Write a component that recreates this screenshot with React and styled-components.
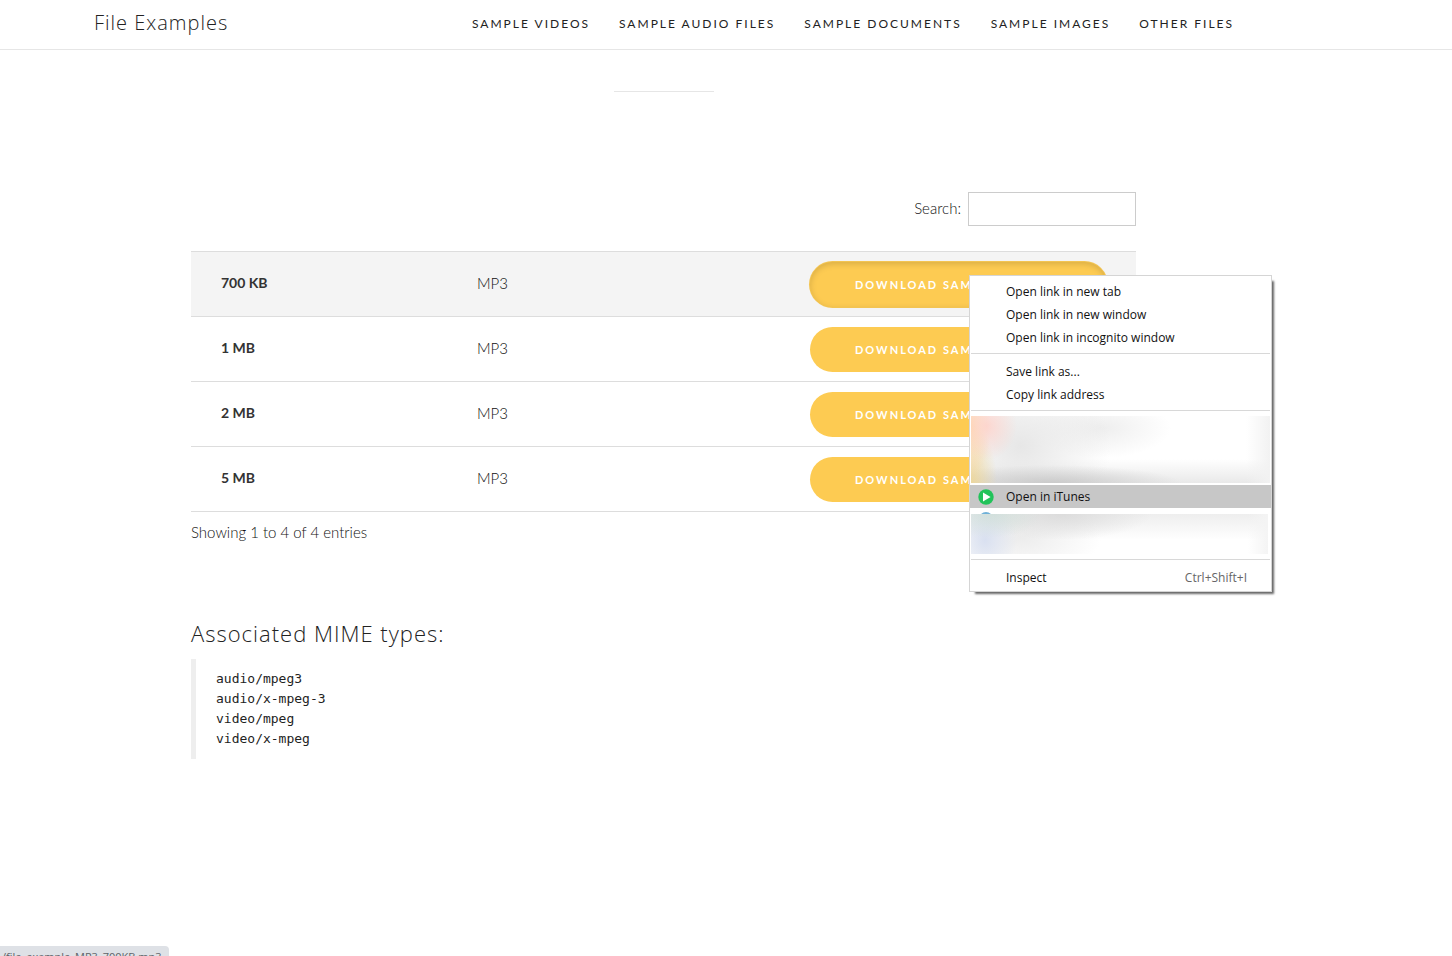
import React from 'react';
import styled, { createGlobalStyle, css } from 'styled-components';

const GlobalStyle = createGlobalStyle`
  * {
    box-sizing: border-box;
  }

  body {
    background: #fff;
    color: #111;
    font-family: Lato, "Liberation Sans", sans-serif;
    font-size: 15px;
    line-height: 28px;
    margin: 0;
  }
`;

const Page = styled.div`
  min-height: 100vh;
  position: relative;
`;

const Header = styled.header`
  border-bottom: 1px solid #e6e6e6;
  padding-right: 124px;
`;

const HeaderInner = styled.div`
  align-items: center;
  display: flex;
  height: 49px;
  justify-content: space-between;
  margin: 0 auto;
  max-width: 1140px;
  padding-bottom: 2px;
`;

const Logo = styled.a`
  color: #222;
  font-family: "Open Sans", "Noto Sans", sans-serif;
  font-size: 20px;
  font-weight: 300;
  letter-spacing: 1px;
  padding-bottom: 2px;
  text-decoration: none;
`;

const Nav = styled.nav`
  display: flex;
  gap: 29px;
`;

const NavLink = styled.a`
  color: #222;
  font-size: 12px;
  letter-spacing: 2px;
  text-decoration: none;
  text-transform: uppercase;
  white-space: nowrap;
`;

const Main = styled.main`
  padding: 41px 125px 0 0;
`;

const Divider = styled.hr`
  border: 0;
  border-top: 1px solid #e6e6e6;
  margin: 0 auto 100px;
  width: 100px;
`;

const Content = styled.div`
  margin: 0 auto;
  max-width: 945px;
`;

const SearchBar = styled.div`
  align-items: center;
  display: flex;
  gap: 7px;
  justify-content: flex-end;
  margin-bottom: 25px;
`;

const SearchLabel = styled.label`
  font-weight: 300;
  padding-bottom: 2px;
`;

const SearchInput = styled.input`
  border: 1px solid #ccc;
  font: inherit;
  height: 34px;
  padding: 0 10px;
  width: 168px;
`;

const FilesTable = styled.table`
  border-collapse: collapse;
  table-layout: fixed;
  width: 100%;
`;

const Row = styled.tr`
  background: ${props => (props.$hovered ? '#f4f4f4' : '#fff')};
  border-bottom: 1px solid #ddd;
  border-top: 1px solid #ddd;
  height: 65px;
`;

const textCell = css`
  padding: 0 30px 2px;
  text-align: left;
`;

const SizeCell = styled.th`
  ${textCell}
  color: #333;
  font-size: 14px;
  font-weight: bold;
  width: 256px;
`;

const TypeCell = styled.td`
  ${textCell}
  font-weight: 300;
`;

const ActionCell = styled.td`
  padding: 0 29px 0 30px;
  width: 356px;
`;

const DownloadLink = styled.a`
  background: #fdcb52;
  border-radius: 23px;
  box-shadow: ${props => (props.$hovered ? 'inset 0 2px 6px rgba(0, 0, 0, 0.15), 0 0 0 1px #f3c452' : 'none')};
  color: #fff;
  display: block;
  font-size: 11px;
  font-weight: bold;
  letter-spacing: 2px;
  line-height: 45px;
  padding: 0 45px;
  text-decoration: none;
  text-transform: uppercase;
  white-space: nowrap;
`;

const TableInfo = styled.div`
  font-weight: 300;
  margin: 6px 0 72px;
`;

const Heading = styled.h3`
  color: #222;
  font-family: "Open Sans", "Noto Sans", sans-serif;
  font-size: 22px;
  font-weight: 300;
  letter-spacing: 1px;
  line-height: 30px;
  margin: 0 0 11px;
`;

const MimeTypes = styled.pre`
  border-left: 5px solid #eee;
  color: #222;
  font-family: "DejaVu Sans Mono", monospace;
  font-size: 13px;
  line-height: 20px;
  margin: 0;
  padding: 10px 20px;
`;

const ContextMenu = styled.div`
  background: #fff;
  border: 1px solid #d5d5d5;
  box-shadow: 4px 4px 2px -2px rgba(0, 0, 0, 0.6);
  left: 969px;
  padding: 3px 0 2px;
  position: absolute;
  top: 275px;
  width: 303px;
`;

const MenuGroup = styled.div`
  padding-top: 1px;
`;

const MenuItem = styled.button`
  align-items: center;
  background: ${props => (props.$selected ? '#c7c7c7' : 'transparent')};
  border: 0;
  color: #111;
  display: flex;
  font-family: "Open Sans", "Noto Sans", sans-serif;
  font-size: 12px;
  height: 23px;
  padding: 0 24px 0 8px;
  text-align: left;
  width: 100%;
`;

const ItemIcon = styled.span`
  display: flex;
  width: 28px;
`;

const Shortcut = styled.span`
  color: #666;
  margin-left: auto;
`;

const Separator = styled.hr`
  border: 0;
  border-top: 1px solid #d8d8d8;
  margin: 4px 1px 5px;
`;

const HazeTop = styled.div`
  background:
    radial-gradient(ellipse 30px 34px at 16px 10px, rgba(255, 208, 200, 0.8), transparent),
    radial-gradient(ellipse 20px 50px at 0 10px, rgba(255, 215, 170, 0.9), transparent),
    radial-gradient(ellipse 26px 60px at 0 100%, rgba(238, 214, 150, 0.9), transparent),
    radial-gradient(ellipse 130px 18px at 80px 100%, rgba(195, 195, 195, 0.8), transparent),
    radial-gradient(ellipse 90px 80px at 50px 30px, rgba(228, 228, 228, 0.9), transparent),
    radial-gradient(ellipse 70px 30px at 130px 12px, rgba(236, 236, 236, 0.9), transparent),
    linear-gradient(to left, #f2f2f2, transparent 24px),
    linear-gradient(to top, #e9e9e9, #fff 24px);
  height: 67px;
  margin: 0 1px 2px;
`;

const HazeBottom = styled.div`
  background:
    radial-gradient(ellipse 50px 24px at 20px 0, rgba(205, 222, 216, 0.8), transparent),
    radial-gradient(ellipse 32px 40px at 14px 26px, rgba(214, 222, 240, 0.9), transparent),
    radial-gradient(ellipse 90px 26px at 90px 0, rgba(218, 218, 218, 0.9), transparent),
    radial-gradient(ellipse 80px 40px at 50px 24px, rgba(234, 234, 234, 0.9), transparent),
    linear-gradient(to left, #f4f4f4, transparent 20px),
    linear-gradient(to bottom, #eee, #fff 26px);
  height: 40px;
  margin: 0 3px 5px 1px;
`;

const IconPeek = styled.div`
  height: 6px;
  overflow: hidden;
  padding: 4px 0 0 9px;

  svg {
    display: block;
  }
`;

const StatusBubble = styled.div`
  background: #dee1e6;
  border-radius: 0 4px 0 0;
  bottom: -12px;
  color: #5f6368;
  font-family: "Open Sans", "Noto Sans", sans-serif;
  font-size: 11px;
  height: 22px;
  left: 0;
  line-height: 22px;
  padding: 0 8px 0 2px;
  position: fixed;
`;

const navLinks = ['Sample Videos', 'Sample Audio Files', 'Sample Documents', 'Sample Images', 'Other Files'];

const files = [
  { size: '700 KB', type: 'MP3', hovered: true },
  { size: '1 MB', type: 'MP3' },
  { size: '2 MB', type: 'MP3' },
  { size: '5 MB', type: 'MP3' },
];

const mimeTypes = ['audio/mpeg3', 'audio/x-mpeg-3', 'video/mpeg', 'video/x-mpeg'];

const PlayIcon = () => (
  <svg width="16" height="16" viewBox="0 0 16 16">
    <circle cx="8" cy="8" r="7.7" fill="#22c35a" />
    <path d="M5 3.6v8.8L12.6 8z" fill="#fff" />
  </svg>
);

const Item = ({ label, icon, shortcut, selected }) => (
  <MenuItem type="button" role="menuitem" $selected={selected}>
    <ItemIcon>{icon}</ItemIcon>
    {label}
    {shortcut && <Shortcut>{shortcut}</Shortcut>}
  </MenuItem>
);

const LinkMenu = () => (
  <ContextMenu role="menu">
    <MenuGroup>
      <Item label="Open link in new tab" />
      <Item label="Open link in new window" />
      <Item label="Open link in incognito window" />
    </MenuGroup>
    <Separator />
    <MenuGroup>
      <Item label="Save link as..." />
      <Item label="Copy link address" />
    </MenuGroup>
    <Separator />
    <HazeTop />
    <Item label="Open in iTunes" icon={<PlayIcon />} selected />
    <IconPeek>
      <svg width="14" height="14" viewBox="0 0 14 14">
        <circle cx="7" cy="7" r="7" fill="#6fb1d8" />
      </svg>
    </IconPeek>
    <HazeBottom />
    <Separator />
    <MenuGroup>
      <Item label="Inspect" shortcut="Ctrl+Shift+I" />
    </MenuGroup>
  </ContextMenu>
);

export default function App() {
  return (
    <Page>
      <GlobalStyle />
      <Header>
        <HeaderInner>
          <Logo href="#">File Examples</Logo>
          <Nav>
            {navLinks.map(label => (
              <NavLink key={label} href="#">{label}</NavLink>
            ))}
          </Nav>
        </HeaderInner>
      </Header>
      <Main>
        <Divider />
        <Content>
          <SearchBar>
            <SearchLabel htmlFor="search">Search:</SearchLabel>
            <SearchInput id="search" type="search" />
          </SearchBar>
          <FilesTable>
            <tbody>
              {files.map(({ size, type, hovered }) => (
                <Row key={size} $hovered={hovered}>
                  <SizeCell scope="row">{size}</SizeCell>
                  <TypeCell>{type}</TypeCell>
                  <ActionCell>
                    <DownloadLink href="#" $hovered={hovered}>Download sample MP3 file</DownloadLink>
                  </ActionCell>
                </Row>
              ))}
            </tbody>
          </FilesTable>
          <TableInfo>Showing 1 to 4 of 4 entries</TableInfo>
          <Heading>Associated MIME types:</Heading>
          <MimeTypes>{mimeTypes.join('\n')}</MimeTypes>
        </Content>
      </Main>
      <LinkMenu />
      <StatusBubble>/file_example_MP3_700KB.mp3</StatusBubble>
    </Page>
  );
}
